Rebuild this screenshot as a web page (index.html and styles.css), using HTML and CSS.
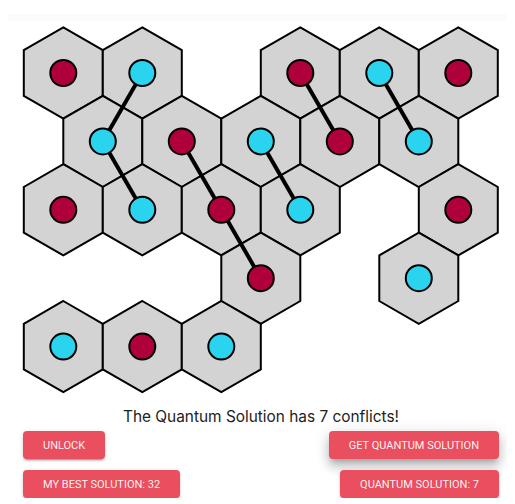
FILE: index.html
```html
<!DOCTYPE html>
<html>
<head>
<meta charset="utf-8">
<link rel="stylesheet" href="styles.css">
</head>
<body>
<div class="topbar"></div>
<svg class="board" width="499" height="384" viewBox="0 0 499 384">
  <defs>
    <polygon id="hex" points="0,-45.6 39.5,-22.8 39.5,22.8 0,45.6 -39.5,22.8 -39.5,-22.8"/>
  </defs>
  <g class="hexes">
    <use href="#hex" x="55.3" y="52"/>
    <use href="#hex" x="134.3" y="52"/>
    <use href="#hex" x="292.3" y="52"/>
    <use href="#hex" x="371.3" y="52"/>
    <use href="#hex" x="450.3" y="52"/>
    <use href="#hex" x="94.8" y="120.4"/>
    <use href="#hex" x="173.8" y="120.4"/>
    <use href="#hex" x="252.8" y="120.4"/>
    <use href="#hex" x="331.8" y="120.4"/>
    <use href="#hex" x="410.8" y="120.4"/>
    <use href="#hex" x="55.3" y="188.8"/>
    <use href="#hex" x="134.3" y="188.8"/>
    <use href="#hex" x="213.3" y="188.8"/>
    <use href="#hex" x="292.3" y="188.8"/>
    <use href="#hex" x="450.3" y="188.8"/>
    <use href="#hex" x="252.8" y="257.2"/>
    <use href="#hex" x="410.8" y="257.2"/>
    <use href="#hex" x="55.3" y="325.6"/>
    <use href="#hex" x="134.3" y="325.6"/>
    <use href="#hex" x="213.3" y="325.6"/>
  </g>
  <g class="bonds">
    <line x1="134.3" y1="52" x2="94.8" y2="120.4"/>
    <line x1="94.8" y1="120.4" x2="134.3" y2="188.8"/>
    <line x1="173.8" y1="120.4" x2="213.3" y2="188.8"/>
    <line x1="213.3" y1="188.8" x2="252.8" y2="257.2"/>
    <line x1="252.8" y1="120.4" x2="292.3" y2="188.8"/>
    <line x1="292.3" y1="52" x2="331.8" y2="120.4"/>
    <line x1="371.3" y1="52" x2="410.8" y2="120.4"/>
  </g>
  <g class="spins">
    <circle class="red" cx="55.3" cy="52" r="13"/>
    <circle class="cyan" cx="134.3" cy="52" r="13"/>
    <circle class="red" cx="292.3" cy="52" r="13"/>
    <circle class="cyan" cx="371.3" cy="52" r="13"/>
    <circle class="red" cx="450.3" cy="52" r="13"/>
    <circle class="cyan" cx="94.8" cy="120.4" r="13"/>
    <circle class="red" cx="173.8" cy="120.4" r="13"/>
    <circle class="cyan" cx="252.8" cy="120.4" r="13"/>
    <circle class="red" cx="331.8" cy="120.4" r="13"/>
    <circle class="cyan" cx="410.8" cy="120.4" r="13"/>
    <circle class="red" cx="55.3" cy="188.8" r="13"/>
    <circle class="cyan" cx="134.3" cy="188.8" r="13"/>
    <circle class="red" cx="213.3" cy="188.8" r="13"/>
    <circle class="cyan" cx="292.3" cy="188.8" r="13"/>
    <circle class="red" cx="450.3" cy="188.8" r="13"/>
    <circle class="red" cx="252.8" cy="257.2" r="13"/>
    <circle class="cyan" cx="410.8" cy="257.2" r="13"/>
    <circle class="cyan" cx="55.3" cy="325.6" r="13"/>
    <circle class="red" cx="134.3" cy="325.6" r="13"/>
    <circle class="cyan" cx="213.3" cy="325.6" r="13"/>
  </g>
</svg>
<div class="panel">
  <p class="status">The Quantum Solution has 7 conflicts!</p>
  <div class="controls">
    <button class="btn left">Unlock</button>
    <button class="btn right raised">Get Quantum Solution</button>
    <button class="btn left">My Best Solution: 32</button>
    <button class="btn right">Quantum Solution: 7</button>
  </div>
</div>
</body>
</html>
```

FILE: styles.css
```css
html, body {
  background: #fff;
}
body {
  margin: 8px;
  font-family: Inter, "Noto Sans", sans-serif;
}
.topbar {
  height: 7px;
  margin-top: 6px;
  background: #fbfbfb;
}
.board {
  display: block;
}
.hexes use {
  fill: #d3d3d3;
  stroke: #000;
  stroke-width: 2;
  stroke-linejoin: miter;
}
.bonds line {
  stroke: #000;
  stroke-width: 4;
}
.spins circle {
  stroke: #000;
  stroke-width: 2;
}
.spins .red {
  fill: #b0003c;
}
.spins .cyan {
  fill: #2ad4ee;
}
.panel {
  padding: 0 8px 0 15px;
}
.status {
  margin: 0;
  text-align: center;
  font-size: 15.4px;
  line-height: 24px;
  color: #222;
}
.controls {
  margin-top: 2px;
  display: grid;
  grid-template-columns: 1fr 1fr;
  row-gap: 11px;
}
.btn {
  height: 28px;
  padding: 0 20px;
  border: none;
  border-radius: 4px;
  background: #e94f5e;
  color: rgba(255, 255, 255, 0.94);
  font-family: Roboto, sans-serif;
  font-size: 11px;
  font-weight: 400;
  letter-spacing: 0;
  text-transform: uppercase;
  box-shadow: 0 3px 1px -2px rgba(0,0,0,.2), 0 2px 2px 0 rgba(0,0,0,.14), 0 1px 5px 0 rgba(0,0,0,.12);
}
.left {
  justify-self: start;
}
.right {
  justify-self: end;
}
.raised {
  box-shadow: 0 5px 5px -3px rgba(0,0,0,.2), 0 8px 10px 1px rgba(0,0,0,.14), 0 3px 14px 2px rgba(0,0,0,.12);
}
```
